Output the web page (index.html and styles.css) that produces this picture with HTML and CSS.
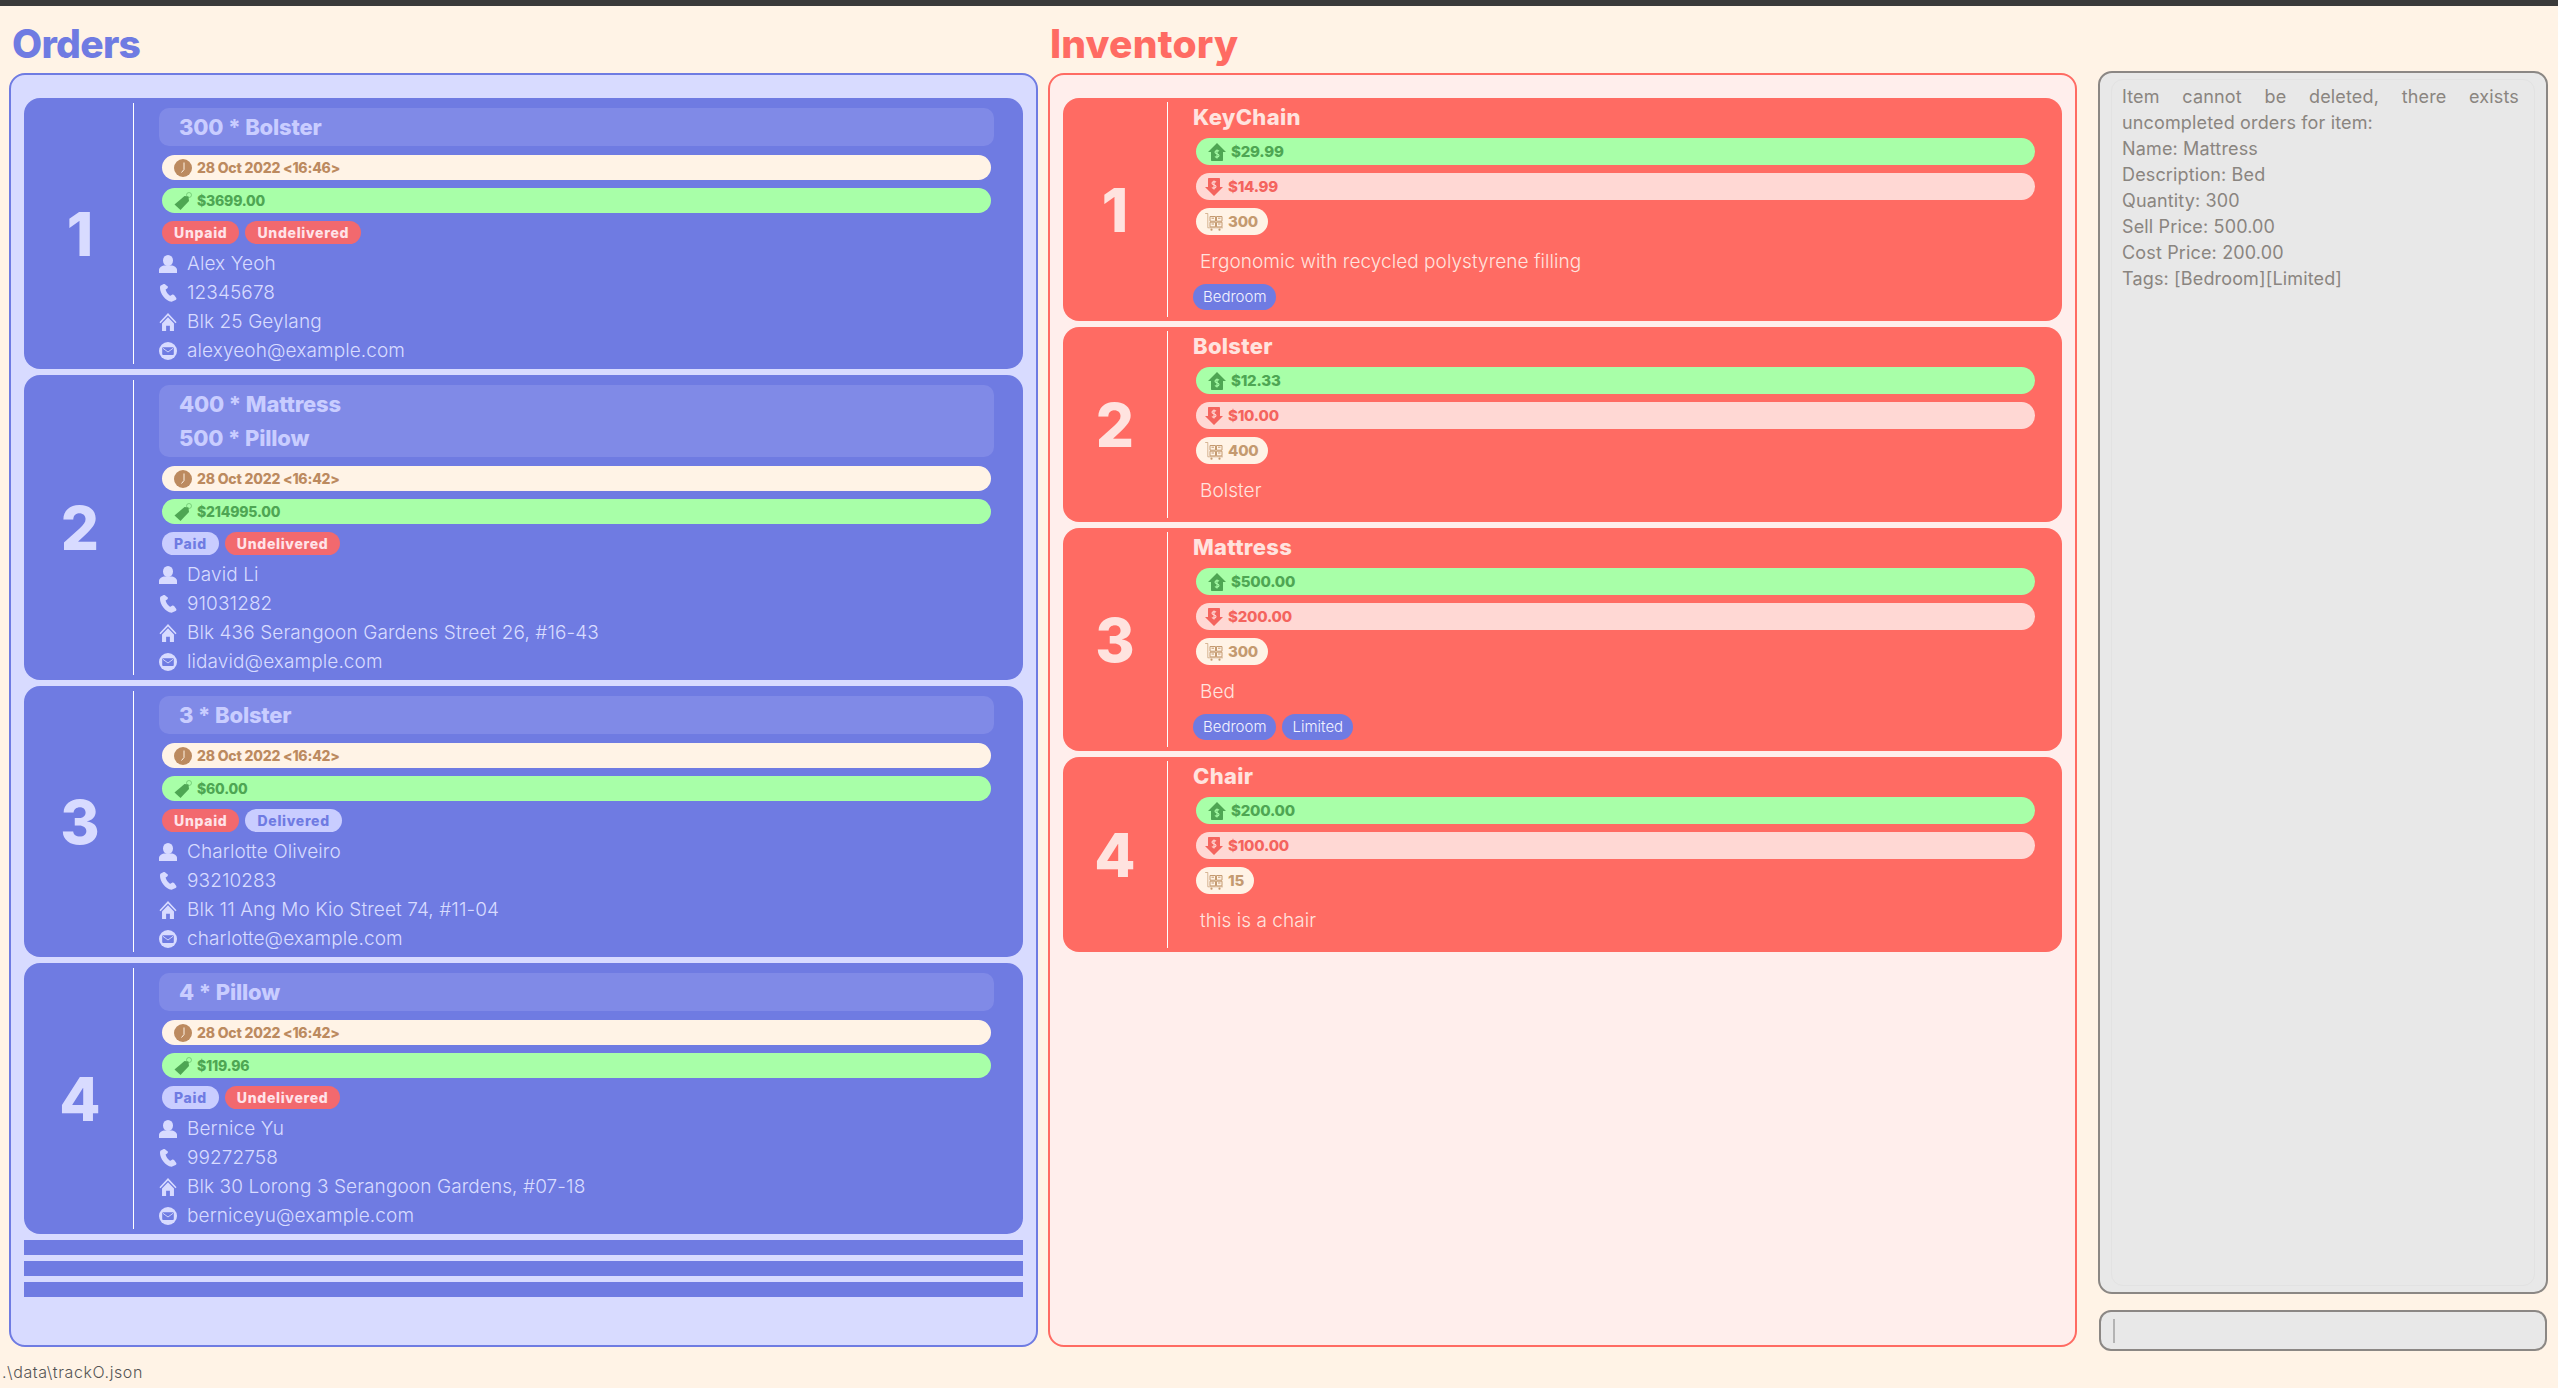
FILE: index.html
```html
<!doctype html>
<html>
<head>
    <meta charset="UTF-8">
    <title>TrackO</title>
    <link rel="stylesheet" href="styles.css">
</head>
<body>
    <svg class="defs" width="0" height="0">
        <symbol id="i-clock" viewBox="0 0 18 18">
            <circle cx="9" cy="9" r="9" fill="currentColor"/>
            <path d="M10 3.500V10.500L7.500 13.500" fill="none" stroke="#fff3e6" stroke-width="1"/>
        </symbol>
        <symbol id="i-tag" viewBox="0 0 18 18">
            <path d="M.5 12.500 10.500 4l4 .5.5 4.500-8.500 9z" fill="currentColor"/>
            <circle cx="15" cy="3" r="2.500" fill="none" stroke="currentColor" stroke-width=".5"/>
        </symbol>
        <symbol id="i-person" viewBox="0 0 18 18">
            <ellipse cx="9" cy="5.500" rx="5" ry="5.500" fill="currentColor"/>
            <path d="M0 18v-3.200C0 12.500 3 10.500 6 10.500h6c3 0 6 2 6 4.300V18z" fill="currentColor"/>
        </symbol>
        <symbol id="i-phone" viewBox="0 0 18 18">
            <path d="M4.200.3 1.400 1.700C-.6 6.500 5.200 16.800 12.600 17.800l4-1.900c.9-.5 1.100-1.400.5-2.200l-2-2.700c-.6-.7-1.400-.8-2.100-.3l-1.600 1c-2-.7-4.400-4.300-4.800-6.300l1.600-1c.7-.5.900-1.200.6-2L6.800 1C6.200.1 5.200-.2 4.200.3z" fill="currentColor"/>
        </symbol>
        <symbol id="i-home" viewBox="0 0 18 19">
            <path d="M9 0 0 9.700l1.100 1.200L9 2.700l7.900 8.200L18 9.700z" fill="currentColor"/>
            <path d="M9 4.500 2.700 11v8h4.300v-5.500h4V19h4.300v-8z" fill="currentColor"/>
        </symbol>
        <symbol id="i-mail" viewBox="0 0 18 18">
            <circle cx="9" cy="9" r="9" fill="currentColor"/>
            <rect x="3.200" y="5.200" width="11.600" height="7.800" rx="1" fill="#6f7be2"/>
            <path d="m3.800 6.200 5.200 3.800 5.200-3.800" fill="none" stroke="currentColor" stroke-width=".9"/>
        </symbol>
        <symbol id="i-up" viewBox="0 0 18 18">
            <path d="M9 0 18 9h-3v8c0 .6-.4 1-1 1H4c-.6 0-1-.4-1-1V9H0z" fill="currentColor"/>
            <path d="M11 8.200C10.400 7.400 7 7.200 7 9.200c0 2 4 1.300 4 3.400 0 2-3.500 1.800-4 .9M9 6.500v9" fill="none" stroke="#a8ffa8" stroke-width="1.100"/>
        </symbol>
        <symbol id="i-down" viewBox="0 0 18 18">
            <path d="M9 18 0 9h3V1c0-.6.4-1 1-1h10c.6 0 1 .4 1 1v8h3z" fill="currentColor"/>
            <path d="M11 4.200C10.400 3.400 7 3.200 7 5.200c0 2 4 1.300 4 3.400 0 2-3.500 1.800-4 .9M9 2.500v9" fill="none" stroke="#ffd8d4" stroke-width="1.100"/>
        </symbol>
        <symbol id="i-cart" viewBox="0 0 18 18">
            <path d="M.2.5h2.600v14.300H18" fill="none" stroke="currentColor" stroke-width=".7"/>
            <path d="M5 3.500h5.500v4.700H5zM11.500 3.500H17v4.700h-5.500zM5 9.200h5.500v4.700H5zM11.500 9.200H17v4.700h-5.500z" fill="none" stroke="currentColor" stroke-width="1"/>
            <path d="M6.500 5.200H9M13 5.200h2.500M6.500 11h2.500M13 11h2.500" stroke="currentColor" stroke-width="1"/>
            <circle cx="6.500" cy="16.700" r="1.100" fill="currentColor"/>
            <circle cx="14.500" cy="16.700" r="1.100" fill="currentColor"/>
        </symbol>
    </svg>

    <div class="topbar"></div>
    <div class="main">
        <div class="col">
            <h1 class="heading heading-orders">Orders</h1>
            <div class="panel panel-orders">
                <div class="card">
                    <div class="num">1</div>
                    <div class="body">
                        <div class="items"><div>300 * Bolster</div></div>
                        <div class="pill pill-date"><svg class="pill-icon"><use href="#i-clock"/></svg>28 Oct 2022 &lt;16:46&gt;</div>
                        <div class="pill pill-total"><svg class="pill-icon"><use href="#i-tag"/></svg>$3699.00</div>
                        <div class="chips"><span class="chip chip-no">Unpaid</span><span class="chip chip-no">Undelivered</span></div>
                        <div class="row"><svg class="row-icon"><use href="#i-person"/></svg>Alex Yeoh</div>
                        <div class="row"><svg class="row-icon"><use href="#i-phone"/></svg>12345678</div>
                        <div class="row"><svg class="row-icon"><use href="#i-home"/></svg>Blk 25 Geylang</div>
                        <div class="row"><svg class="row-icon"><use href="#i-mail"/></svg>alexyeoh@example.com</div>
                    </div>
                </div>
                <div class="card">
                    <div class="num">2</div>
                    <div class="body">
                        <div class="items"><div>400 * Mattress</div><div>500 * Pillow</div></div>
                        <div class="pill pill-date"><svg class="pill-icon"><use href="#i-clock"/></svg>28 Oct 2022 &lt;16:42&gt;</div>
                        <div class="pill pill-total"><svg class="pill-icon"><use href="#i-tag"/></svg>$214995.00</div>
                        <div class="chips"><span class="chip chip-yes">Paid</span><span class="chip chip-no">Undelivered</span></div>
                        <div class="row"><svg class="row-icon"><use href="#i-person"/></svg>David Li</div>
                        <div class="row"><svg class="row-icon"><use href="#i-phone"/></svg>91031282</div>
                        <div class="row"><svg class="row-icon"><use href="#i-home"/></svg>Blk 436 Serangoon Gardens Street 26, #16-43</div>
                        <div class="row"><svg class="row-icon"><use href="#i-mail"/></svg>lidavid@example.com</div>
                    </div>
                </div>
                <div class="card">
                    <div class="num">3</div>
                    <div class="body">
                        <div class="items"><div>3 * Bolster</div></div>
                        <div class="pill pill-date"><svg class="pill-icon"><use href="#i-clock"/></svg>28 Oct 2022 &lt;16:42&gt;</div>
                        <div class="pill pill-total"><svg class="pill-icon"><use href="#i-tag"/></svg>$60.00</div>
                        <div class="chips"><span class="chip chip-no">Unpaid</span><span class="chip chip-yes">Delivered</span></div>
                        <div class="row"><svg class="row-icon"><use href="#i-person"/></svg>Charlotte Oliveiro</div>
                        <div class="row"><svg class="row-icon"><use href="#i-phone"/></svg>93210283</div>
                        <div class="row"><svg class="row-icon"><use href="#i-home"/></svg>Blk 11 Ang Mo Kio Street 74, #11-04</div>
                        <div class="row"><svg class="row-icon"><use href="#i-mail"/></svg>charlotte@example.com</div>
                    </div>
                </div>
                <div class="card">
                    <div class="num">4</div>
                    <div class="body">
                        <div class="items"><div>4 * Pillow</div></div>
                        <div class="pill pill-date"><svg class="pill-icon"><use href="#i-clock"/></svg>28 Oct 2022 &lt;16:42&gt;</div>
                        <div class="pill pill-total"><svg class="pill-icon"><use href="#i-tag"/></svg>$119.96</div>
                        <div class="chips"><span class="chip chip-yes">Paid</span><span class="chip chip-no">Undelivered</span></div>
                        <div class="row"><svg class="row-icon"><use href="#i-person"/></svg>Bernice Yu</div>
                        <div class="row"><svg class="row-icon"><use href="#i-phone"/></svg>99272758</div>
                        <div class="row"><svg class="row-icon"><use href="#i-home"/></svg>Blk 30 Lorong 3 Serangoon Gardens, #07-18</div>
                        <div class="row"><svg class="row-icon"><use href="#i-mail"/></svg>berniceyu@example.com</div>
                    </div>
                </div>
                <div class="stripe"></div>
                <div class="stripe"></div>
                <div class="stripe"></div>
            </div>
        </div>

        <div class="col">
            <h1 class="heading heading-inventory">Inventory</h1>
            <div class="panel panel-inventory">
                <div class="card card-item">
                    <div class="num">1</div>
                    <div class="body">
                        <div class="name">KeyChain</div>
                        <div class="pill pill-sell"><svg class="pill-icon"><use href="#i-up"/></svg>$29.99</div>
                        <div class="pill pill-cost"><svg class="pill-icon"><use href="#i-down"/></svg>$14.99</div>
                        <div class="pill pill-qty"><svg class="pill-icon"><use href="#i-cart"/></svg>300</div>
                        <div class="desc">Ergonomic with recycled polystyrene filling</div>
                        <div class="tags"><span class="tag">Bedroom</span></div>
                    </div>
                </div>
                <div class="card card-item">
                    <div class="num">2</div>
                    <div class="body">
                        <div class="name">Bolster</div>
                        <div class="pill pill-sell"><svg class="pill-icon"><use href="#i-up"/></svg>$12.33</div>
                        <div class="pill pill-cost"><svg class="pill-icon"><use href="#i-down"/></svg>$10.00</div>
                        <div class="pill pill-qty"><svg class="pill-icon"><use href="#i-cart"/></svg>400</div>
                        <div class="desc">Bolster</div>
                    </div>
                </div>
                <div class="card card-item">
                    <div class="num">3</div>
                    <div class="body">
                        <div class="name">Mattress</div>
                        <div class="pill pill-sell"><svg class="pill-icon"><use href="#i-up"/></svg>$500.00</div>
                        <div class="pill pill-cost"><svg class="pill-icon"><use href="#i-down"/></svg>$200.00</div>
                        <div class="pill pill-qty"><svg class="pill-icon"><use href="#i-cart"/></svg>300</div>
                        <div class="desc">Bed</div>
                        <div class="tags"><span class="tag">Bedroom</span><span class="tag">Limited</span></div>
                    </div>
                </div>
                <div class="card card-item">
                    <div class="num">4</div>
                    <div class="body">
                        <div class="name">Chair</div>
                        <div class="pill pill-sell"><svg class="pill-icon"><use href="#i-up"/></svg>$200.00</div>
                        <div class="pill pill-cost"><svg class="pill-icon"><use href="#i-down"/></svg>$100.00</div>
                        <div class="pill pill-qty"><svg class="pill-icon"><use href="#i-cart"/></svg>15</div>
                        <div class="desc">this is a chair</div>
                    </div>
                </div>
            </div>
        </div>

        <div class="side">
            <div class="result">
                <div class="result-inner">
                    <p class="justify">Item cannot be deleted, there exists uncompleted orders for item:</p>
                    <p>Name: Mattress</p>
                    <p>Description: Bed</p>
                    <p>Quantity: 300</p>
                    <p>Sell Price: 500.00</p>
                    <p>Cost Price: 200.00</p>
                    <p>Tags: [Bedroom][Limited]</p>
                </div>
            </div>
            <div class="command"><span class="caret"></span></div>
        </div>
    </div>
    <div class="status">.\data\trackO.json</div>
</body>
</html>
```

FILE: styles.css
```css
* {
    box-sizing: border-box;
}
body {
    margin: 0;
    height: 1388px;
    overflow: hidden;
    background-color: #fff3e6;
    font-family: Inter, "Open Sans", sans-serif;
}
.defs {
    display: block;
    height: 0;
}
.topbar {
    height: 6px;
    background-color: #3a3a3a;
}

/* columns */
.main {
    display: flex;
    height: 1341px;
    padding-left: 9px;
}
.col {
    width: 1029px;
    margin-right: 10px;
    display: flex;
    flex-direction: column;
}
.heading {
    margin: 0;
    height: 67px;
    padding: 14px 0 0 3px;
    font-size: 39px;
    line-height: 48px;
    font-weight: 800;
    letter-spacing: 0.2px;
}
.heading-orders {
    color: #6f7be2;
    letter-spacing: -0.7px;
}
.heading-inventory {
    padding-left: 2px;
    color: #ff6b63;
}
.panel {
    height: 1274px;
    padding: 23px 13px 0;
    border-radius: 16px;
    border: 2px solid;
}
.panel-orders {
    background-color: #d8dbff;
    border-color: #6f7be2;
}
.panel-inventory {
    background-color: #ffeeec;
    border-color: #ff6b63;
}

/* cards */
.card {
    display: flex;
    margin-bottom: 6px;
    padding: 5px 0;
    border-radius: 16px;
    background-color: #6f7be2;
    color: #d8dbff;
}
.card-item {
    background-color: #ff6b63;
    color: #ffe3df;
    padding: 4px 0;
}
.num {
    width: 110px;
    flex: none;
    display: flex;
    align-items: center;
    justify-content: center;
    padding-left: 3px;
    border-right: 1px solid #fff;
    font-size: 60px;
    font-weight: 800;
}
.card-item .num {
    width: 105px;
    padding-left: 0;
    color: #ffe3df;
}
.body {
    flex: 1;
    margin-bottom: -1px;
    padding: 5px 29px 0 25px;
}
.card-item .body {
    margin-bottom: 0;
    padding: 0 27px 0 25px;
}
.stripe {
    height: 15px;
    margin-bottom: 6px;
    background-color: #6f7be2;
}

/* order card */
.items {
    padding: 2px 20px;
    border-radius: 10px;
    background-color: #808ae7;
    color: #c9cdff;
    font-size: 22px;
    font-weight: 800;
    line-height: 34px;
    letter-spacing: -0.2px;
}
.pill {
    display: flex;
    align-items: center;
    margin: 8px 3px 0;
    height: 25px;
    padding-left: 12px;
    border-radius: 13px;
    font-size: 14px;
    font-weight: 800;
    letter-spacing: -0.2px;
}
.pill-icon {
    width: 18px;
    height: 18px;
    margin-right: 5px;
    flex: none;
}
.pill-date {
    margin-top: 9px;
    background-color: #fff3e6;
    color: #bc8a5f;
}
.pill-total {
    background-color: #a8ffa8;
    color: #4ea653;
}
.chips {
    display: flex;
    gap: 6px;
    margin: 8px 0 5px 3px;
}
.chip {
    height: 23px;
    padding: 0 12px;
    border-radius: 12px;
    font-size: 14px;
    font-weight: 800;
    line-height: 23px;
    letter-spacing: 0.7px;
}
.chip-no {
    background-color: #f2696e;
    color: #ffe3e8;
}
.chip-yes {
    background-color: #c9cdff;
    color: #6f7be2;
}
.row {
    display: flex;
    align-items: center;
    height: 29px;
    font-size: 19px;
    font-weight: 300;
    letter-spacing: 0.1px;
}
.row-icon {
    width: 18px;
    height: 18px;
    margin-right: 10px;
    flex: none;
}

/* inventory card */
.name {
    height: 31px;
    font-size: 22px;
    font-weight: 800;
    line-height: 31px;
    letter-spacing: 0.3px;
}
.card-item .pill {
    height: 27px;
    margin: 8px 0 0 3px;
    font-size: 15px;
    border-radius: 14px;
}
.card-item .name + .pill {
    margin-top: 5px;
}
.pill-sell {
    background-color: #a8ffa8;
    color: #4ea653;
}
.pill-cost {
    padding-left: 9px;
    background-color: #ffd8d4;
    color: #f4645e;
}
.pill-qty {
    width: max-content;
    padding-left: 9px;
    padding-right: 10px;
    background-color: #fff3e6;
    color: #c49a70;
}
.desc {
    margin: 12px 0 0 7px;
    padding-bottom: 12px;
    font-size: 19px;
    font-weight: 300;
    line-height: 30px;
    letter-spacing: 0.05px;
}
.tags {
    display: flex;
    gap: 6px;
    margin-top: -5px;
    margin-bottom: 7px;
}
.tag {
    height: 26px;
    padding: 0 10px;
    border-radius: 13px;
    background-color: #6f7be2;
    color: #f3f3ff;
    font-size: 15px;
    font-weight: 300;
    line-height: 26px;
}

/* right side */
.side {
    width: 450px;
    margin-left: 11px;
    padding-top: 65px;
}
.result {
    height: 1223px;
    padding: 6px 11px;
    border: 2px solid #8b8784;
    border-radius: 14px;
    background-color: #e8e8e8;
}
.result-inner {
    height: 100%;
    padding: 4px 15px 4px 10px;
    border: 1px solid #e2e2e2;
    border-radius: 12px;
    color: #8a8580;
    font-size: 18px;
    line-height: 26px;
    letter-spacing: 0.15px;
}
.result-inner p {
    margin: 0;
}
.result-inner .justify {
    text-align: justify;
}
.command {
    width: 448px;
    height: 41px;
    margin: 16px 0 0 1px;
    padding: 7px 12px;
    border: 2px solid #8b8784;
    border-radius: 12px;
    background-color: #e8e8e8;
}
.caret {
    display: block;
    width: 2px;
    height: 24px;
    background-color: #b3b3b3;
}
.status {
    height: 41px;
    padding: 13px 0 0 2px;
    color: #555;
    font-size: 16px;
    font-weight: 300;
    line-height: 24px;
    letter-spacing: 0.6px;
}
```
